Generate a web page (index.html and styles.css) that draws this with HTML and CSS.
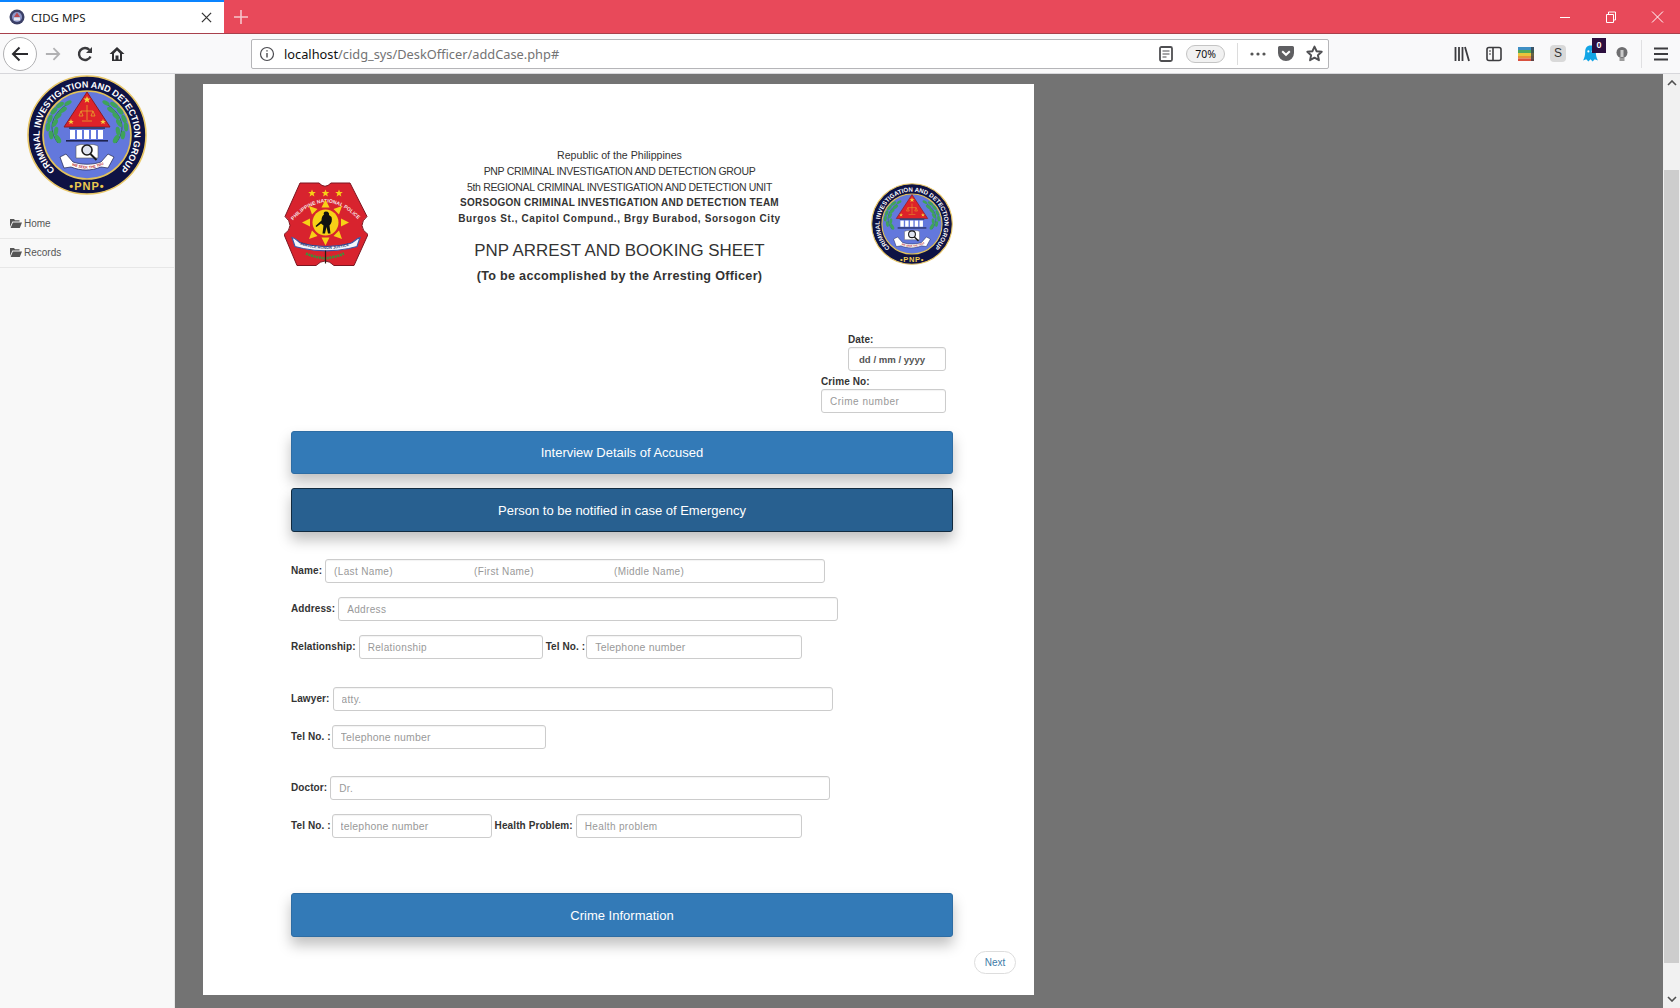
FILE: index.html
```html
<!DOCTYPE html>
<html lang="en">
<head>
  <meta charset="UTF-8">
  <title>CIDG MPS</title>
  <link rel="stylesheet" href="styles.css">
</head>
<body>

  <svg class="sprite" xmlns="http://www.w3.org/2000/svg">
    <symbol id="folder" viewBox="0 0 12 10">
      <path d="M0 9V1h4l1 1.2h4.500V3.600H2.400L0 9zM2.900 4.500H12L9.800 10H.6z" fill="#555"/>
    </symbol>
  </svg>

  <header class="tabbar">
    <div class="tab">
      <svg class="favicon" viewBox="0 0 16 16">
        <circle cx="8" cy="8" r="7.500" fill="#3a3f66"/>
        <circle cx="8" cy="8" r="5" fill="#8d97c9"/>
        <path d="M8 3.500L5 8h6z" fill="#b8474f"/>
        <rect x="5" y="8.500" width="6" height="3" fill="#e4e4ee"/>
      </svg>
      <span class="tab-title">CIDG MPS</span>
      <svg class="tab-close" viewBox="0 0 12 12"><path d="M1 1l10 10M11 1L1 11" stroke="#333" stroke-width="1.400"/></svg>
    </div>
    <svg class="new-tab" viewBox="0 0 14 14"><path d="M7 0v14M0 7h14" stroke="#f6c6cc" stroke-width="1.600"/></svg>
    <div class="win-controls">
      <svg viewBox="0 0 46 12"><path d="M18 6.500h10" stroke="#fff"/></svg>
      <svg viewBox="0 0 46 12"><path d="M18.500 3.500h7v8h-7zM20.500 3.500v-2.500h7v8h-2" fill="none" stroke="#fff"/></svg>
      <svg viewBox="0 0 46 12"><path d="M18 .5l11 11M29 .5l-11 11" stroke="#fff"/></svg>
    </div>
  </header>

  <nav class="toolbar">
    <span class="back-btn">
      <svg viewBox="0 0 18 16"><path d="M17 8H2M8.500 1.500L2 8l6.500 6.500" fill="none" stroke="#2a2a2e" stroke-width="2"/></svg>
    </span>
    <span class="tool"><svg viewBox="0 0 18 16"><path d="M1 8h15M9.500 1.500L16 8l-6.500 6.500" fill="none" stroke="#b1b1b3" stroke-width="2"/></svg></span>
    <span class="tool"><svg viewBox="0 0 16 16"><path d="M13.500 10.500A6 6 0 1 1 12.500 4" fill="none" stroke="#3a3a3d" stroke-width="2.400"/><path d="M15 1v6H9z" fill="#3a3a3d"/></svg></span>
    <span class="tool"><svg viewBox="0 0 16 16"><path d="M8 1L0.500 8H3v7h10V8h2.500zM5 13.500V7.500L8 4.600l3 2.900v6H9.500V9.500h-3v4z" fill="#2f2f32"/></svg></span>

    <div class="urlbar">
      <svg class="url-info" viewBox="0 0 16 16"><circle cx="8" cy="8" r="6.500" fill="none" stroke="#4a4a4f" stroke-width="1.200"/><path d="M8 7v4.500M8 4.200v1.400" stroke="#4a4a4f" stroke-width="1.400"/></svg>
      <span class="url-text"><b>localhost</b>/cidg_sys/DeskOfficer/addCase.php#</span>
      <svg class="url-reader" viewBox="0 0 14 16"><rect x="1" y="1" width="12" height="14" rx="1.500" fill="none" stroke="#4f4f52" stroke-width="1.800"/><path d="M3.500 5h7M3.500 8h7M3.500 11h4" stroke="#4f4f52" stroke-width="1.200"/></svg>
      <span class="url-zoom">70%</span>
      <span class="url-sep"></span>
      <svg class="url-dots" viewBox="0 0 16 4"><circle cx="2" cy="2" r="1.600" fill="#555"/><circle cx="8" cy="2" r="1.600" fill="#555"/><circle cx="14" cy="2" r="1.600" fill="#555"/></svg>
      <svg class="url-pocket" viewBox="0 0 16 15"><path d="M1.500 0h13A1.500 1.500 0 0 1 16 1.500V7A8 8 0 0 1 0 7V1.500A1.500 1.500 0 0 1 1.500 0z" fill="#5f5f62"/><path d="M4.200 5.200L8 8.800l3.800-3.600" fill="none" stroke="#fff" stroke-width="2"/></svg>
      <svg class="url-star" viewBox="0 0 16 16"><path d="M8 1.500l2 4.400 4.800.5-3.600 3.200 1 4.700L8 11.900l-4.200 2.400 1-4.700L1.200 6.400 6 5.900z" fill="none" stroke="#4f4f52" stroke-width="1.800" stroke-linejoin="round"/></svg>
    </div>

    <div class="tool-group">
      <span class="tool"><svg viewBox="0 0 16 16"><path d="M1.500 1v14M5 1v14M8.500 1v14M11 1l4 14" stroke="#3c3c3f" stroke-width="1.800" fill="none"/></svg></span>
      <span class="tool"><svg viewBox="0 0 16 16"><rect x="1" y="1.500" width="14" height="13" rx="2" fill="none" stroke="#3c3c3f" stroke-width="1.600"/><path d="M7 2v12" stroke="#3c3c3f" stroke-width="1.600"/><path d="M3 5h2M3 8h2" stroke="#3c3c3f"/></svg></span>
      <span class="tool"><svg viewBox="0 0 16 16"><rect y="1" width="16" height="3" fill="#3f8fc4"/><rect y="4" width="16" height="3" fill="#4fa85c"/><rect y="7" width="16" height="3" fill="#e9c53b"/><rect y="10" width="16" height="2.500" fill="#e8903a"/><rect y="12.500" width="16" height="2.500" fill="#d9513f"/><rect x="13" y="1" width="3" height="14" fill="#3a4048" opacity=".75"/></svg></span>
      <span class="tool"><span class="ext-s">S</span></span>
      <span class="tool ghost">
        <svg viewBox="0 0 16 16"><path d="M8 .5c3.500 0 5 2.500 5 6 0 3 .7 5.500 2 8l-3-1-2 2-2-2-2 2-2-2-3 1c1.300-2.500 2-5 2-8 0-3.500 1.500-6 5-6z" fill="#12a5e6"/><circle cx="6" cy="6" r="1" fill="#fff"/><circle cx="10" cy="6" r="1" fill="#fff"/></svg>
        <span class="ghost-badge">0</span>
      </span>
      <span class="tool"><svg viewBox="0 0 16 16"><circle cx="8" cy="6.500" r="5.500" fill="#6e6e70"/><rect x="6.500" y="4" width="3" height="7" fill="#c9c9c9"/><rect x="5.500" y="12" width="5" height="3" fill="#9a9a9a"/></svg></span>
    </div>
    <span class="tool-sep"></span>
    <span class="tool menu-btn"><svg viewBox="0 0 16 14"><path d="M1 1.500h14M1 7h14M1 12.500h14" stroke="#3c3c3f" stroke-width="2"/></svg></span>
  </nav>

  <div class="viewport">
    <aside class="sidebar">
      <svg class="side-logo" viewBox="0 0 120 120">
        <g id="cidgMark">
          <circle cx="60" cy="60" r="59" fill="#0e1244" stroke="#e9c766" stroke-width="1.600"/>
          <circle cx="60" cy="60" r="44" fill="#6378dc" stroke="#e2c25a" stroke-width="1.600"/>
          <path id="cidgRing" d="M28 95A47.400 47.400 0 1 1 92 95" fill="none"/>
          <text font-family="Liberation Sans, sans-serif" font-weight="700" font-size="9" fill="#fff" textLength="226">
            <textPath href="#cidgRing">CRIMINAL INVESTIGATION AND DETECTION GROUP</textPath>
          </text>
          <text x="60" y="115" text-anchor="middle" font-family="Liberation Sans, sans-serif" font-weight="700" font-size="11" letter-spacing="1" fill="#ecc94f">•PNP•</text>
          <!-- laurel -->
          <g id="cidgLeaves" fill="#3ea35a">
            <path d="M31 68C20 54 24 38 44 27" fill="none" stroke="#1f6e35" stroke-width=".8"/>
            <ellipse cx="31" cy="64" rx="2.400" ry="4.600" transform="rotate(-30 31 64)"/>
            <ellipse cx="24" cy="60" rx="2.200" ry="4.400" transform="rotate(-10 24 60)"/>
            <ellipse cx="29" cy="56" rx="2.200" ry="4.400" transform="rotate(10 29 56)"/>
            <ellipse cx="21" cy="52" rx="2.200" ry="4.400" transform="rotate(5 21 52)"/>
            <ellipse cx="28" cy="48" rx="2.200" ry="4.400" transform="rotate(30 28 48)"/>
            <ellipse cx="23" cy="44" rx="2.200" ry="4.400" transform="rotate(20 23 44)"/>
            <ellipse cx="31" cy="41" rx="2.200" ry="4.400" transform="rotate(45 31 41)"/>
            <ellipse cx="27" cy="36" rx="2.200" ry="4.400" transform="rotate(40 27 36)"/>
            <ellipse cx="36" cy="35" rx="2.200" ry="4.400" transform="rotate(55 36 35)"/>
            <ellipse cx="33" cy="30" rx="2.200" ry="4.400" transform="rotate(55 33 30)"/>
            <ellipse cx="41" cy="28" rx="2" ry="4" transform="rotate(60 41 28)"/>
          </g>
          <use href="#cidgLeaves" transform="matrix(-1 0 0 1 120 0)"/>
          <!-- temple -->
          <path d="M60 17L37 52H83Z" fill="#de2229" stroke="#8c1a24" stroke-width="1"/>
          <path d="M60 21l1 2.600h2.600l-2.100 1.600.8 2.600-2.300-1.600-2.300 1.600.8-2.600-2.100-1.600h2.600zM44 44l.8 2h2l-1.600 1.200.6 2-1.800-1.200-1.800 1.200.6-2-1.600-1.200h2zM76 44l.8 2h2l-1.600 1.200.6 2-1.800-1.200-1.800 1.200.6-2-1.600-1.200h2z" fill="#f4d03f"/>
          <path d="M60 30v15M54 36h12M54 36l-2 5h4zM66 36l-2 5h4zM55 46h10" fill="none" stroke="#e7a52c" stroke-width=".8"/>
          <rect x="42" y="52" width="36" height="2" fill="#3a3f70"/>
          <g fill="#fff">
            <rect x="43" y="55" width="5" height="9"/><rect x="50" y="55" width="5" height="9"/>
            <rect x="57" y="55" width="5" height="9"/><rect x="64" y="55" width="5" height="9"/>
            <rect x="71" y="55" width="5" height="9"/>
          </g>
          <rect x="39" y="65" width="42" height="1.600" fill="#1e2350"/>
          <!-- book and lens -->
          <path d="M49 71c4-2 8-2 11 0 3-2 7-2 11 0v12H49z" fill="#fff" stroke="#555" stroke-width=".6"/>
          <circle cx="60" cy="75" r="5" fill="#dfe4f0" stroke="#1b1b1b" stroke-width="1.600"/>
          <path d="M63.500 79l6 6" stroke="#1b1b1b" stroke-width="2"/>
          <!-- banner -->
          <path d="M33 82l6-3 7 8c9 3 19 3 28 0l7-8 6 3-6 11-7-1c-10 4-20 4-30 0l-7 1z" fill="#fff" stroke="#1e2350" stroke-width=".7"/>
          <path id="cidgMotto" d="M42 89C54 95 66 95 78 89" fill="none"/>
          <text font-family="Liberation Sans, sans-serif" font-weight="700" font-size="3.600" fill="#b3202a">
            <textPath href="#cidgMotto" startOffset="3">WE SEEK THE TRUTH</textPath>
          </text>
        </g>
      </svg>
      <ul class="side-menu">
        <li><svg class="folder"><use href="#folder"/></svg>Home</li>
        <li><svg class="folder"><use href="#folder"/></svg>Records</li>
      </ul>
    </aside>

    <main class="content">
      <div class="paper">
        <div class="sheet-head">
          <svg class="logo-pnp" viewBox="0 0 84 84">
            <path d="M16 .5H35Q41 7 47 .5H66L83 34Q78 38 78 43T84 52L70 83H50Q41 74 32 83H13L0 52Q6 48 6 43T1 34Z" fill="#d8232e" stroke="#7d1520" stroke-width="1"/>
            <path id="pnpArc" d="M9 38Q41.500 2 75 38" fill="none"/>
            <text font-family="Liberation Sans, sans-serif" font-weight="700" font-size="5" fill="#f6e6e6" textLength="76">
              <textPath href="#pnpArc">PHILIPPINE NATIONAL POLICE</textPath>
            </text>
            <path d="M28 7l1 2.600h2.800l-2.200 1.700.8 2.700-2.400-1.600-2.400 1.600.8-2.700-2.200-1.700H27zM41.500 7l1 2.600h2.800l-2.200 1.700.8 2.700-2.400-1.600-2.400 1.600.8-2.700-2.200-1.700h2.800zM55 7l1 2.600h2.800l-2.200 1.700.8 2.700-2.400-1.600-2.400 1.600.8-2.700-2.200-1.700H54z" fill="#f7d117"/>
            <g fill="#f7d117">
              <path d="M41.500 17l4 8h-8zM41.500 63l4-8h-8zM18 40l8-4v8zM65 40l-8-4v8z"/>
              <path d="M25 23.500l8.500 3-5.500 5.500zM58 23.500l-8.500 3 5.500 5.500zM25 56.500l8.500-3-5.500-5.500zM58 56.500l-8.500-3 5.500-5.500z"/>
              <circle cx="41.500" cy="40" r="13"/>
            </g>
            <path d="M42 29c2.500 0 3.500 2 3 3.500l2.500 2c1 3 0 6.500-2 8.500l1 8h-2.500l-1.500-6.500-1.500 6.500h-2.500l1-8-2.500-2-4.500 3.500-1-1 6-5.500c0-3 1-5 2.500-6-.8-1.500 0-3 2-3z" fill="#111"/>
            <path d="M8 55c5 1 6 5 10 6 16 4 32 4 48 0 4-1 6-5 10-6l-3 9-8 2c-15 3-31 3-46 0l-8-2z" fill="#f4f6fb" stroke="#3d56a6" stroke-width="1.200"/>
            <path id="pnpBan" d="M16 62C32 68 52 68 68 62" fill="none"/>
            <text font-family="Liberation Sans, sans-serif" font-weight="700" font-size="3.800" fill="#27346f" textLength="50">
              <textPath href="#pnpBan">SERVICE HONOR JUSTICE</textPath>
            </text>
            <path d="M22 71c6 3 13 4 19 5 6-1 13-2 19-5" fill="none" stroke="#3f8f3a" stroke-width="2.600" stroke-dasharray="2 .7"/>
            <path d="M41.500 68v13" stroke="#2a1a10" stroke-width="1.200"/>
          </svg>
          <div class="head-text">
            <p class="republic">Republic of the Philippines</p>
            <p>PNP CRIMINAL INVESTIGATION AND DETECTION GROUP</p>
            <p>5th REGIONAL CRIMINAL INVESTIGATION AND DETECTION UNIT</p>
            <p class="strong">SORSOGON CRIMINAL INVESTIGATION AND DETECTION TEAM</p>
            <p class="strong addr">Burgos St., Capitol Compund., Brgy Burabod, Sorsogon City</p>
            <h1>PNP ARREST AND BOOKING SHEET</h1>
            <h2>(To be accomplished by the Arresting Officer)</h2>
          </div>
          <svg class="logo-cidg" viewBox="0 0 120 120"><use href="#cidgMark"/></svg>
        </div>

        <div class="date-block">
          <div class="date-field">
            <label for="caseDate">Date:</label>
            <input class="field date-input" id="caseDate" type="text" value="dd / mm / yyyy">
          </div>
          <div class="crime-field">
            <label for="crimeNo">Crime No:</label>
            <input class="field" id="crimeNo" type="text" placeholder="Crime number">
          </div>
        </div>

        <button class="panel-btn">Interview Details of Accused</button>
        <button class="panel-btn active">Person to be notified in case of Emergency</button>

        <form class="person-form">
          <div class="row">
            <label>Name:</label>
            <div class="name-box">
              <input type="text" placeholder="(Last Name)">
              <input type="text" placeholder="(First Name)">
              <input type="text" placeholder="(Middle Name)">
            </div>
          </div>
          <div class="row">
            <label>Address:</label>
            <input class="field w-500" type="text" placeholder="Address">
          </div>
          <div class="row">
            <label>Relationship:</label>
            <input class="field w-184" type="text" placeholder="Relationship">
            <label class="next-label tel">Tel No. :</label>
            <input class="field tel-field w-216" type="text" placeholder="Telephone number">
          </div>

          <div class="row group">
            <label>Lawyer:</label>
            <input class="field w-500" type="text" placeholder="atty.">
          </div>
          <div class="row">
            <label class="tel">Tel No. :</label>
            <input class="field tel-field w-214" type="text" placeholder="Telephone number">
          </div>

          <div class="row group doctor">
            <label>Doctor:</label>
            <input class="field w-500" type="text" placeholder="Dr.">
          </div>
          <div class="row">
            <label class="tel">Tel No. :</label>
            <input class="field tel-field w-160" type="text" placeholder="telephone number">
            <label class="next-label">Health Problem:</label>
            <input class="field w-226" type="text" placeholder="Health problem">
          </div>
        </form>

        <button class="panel-btn crime-btn">Crime Information</button>
        <a class="next-btn" href="#">Next</a>
      </div>
    </main>

    <div class="scrollbar">
      <svg class="arrow" viewBox="0 0 10 6"><path d="M1 5l4-4 4 4" fill="none" stroke="#505050" stroke-width="1.600"/></svg>
      <span class="thumb"></span>
      <svg class="arrow" viewBox="0 0 10 6"><path d="M1 1l4 4 4-4" fill="none" stroke="#505050" stroke-width="1.600"/></svg>
    </div>
  </div>

</body>
</html>
```

FILE: styles.css
```css
* {
  box-sizing: border-box;
}
html, body {
  margin: 0;
  height: 100%;
}
body {
  display: flex;
  flex-direction: column;
  height: 1008px;
  overflow: hidden;
  font-family: "Liberation Sans", Arial, sans-serif;
  color: #333;
}
.sprite {
  position: absolute;
  width: 0;
  height: 0;
}

/* browser chrome */
.tabbar {
  display: flex;
  align-items: center;
  height: 34px;
  background: #e8495a;
  border-bottom: 1px solid #a8404c;
}
.tab {
  display: flex;
  align-items: center;
  width: 224px;
  height: 33px;
  padding: 0 10px 1px 9px;
  background: #fff;
  border-top: 2px solid #0a84ff;
}
.favicon {
  width: 16px;
  height: 16px;
  margin-right: 6px;
}
.tab-title {
  flex: 1;
  font-family: "Noto Sans", sans-serif;
  font-size: 11.5px;
  color: #222;
}
.tab-close {
  width: 11px;
  height: 11px;
  margin-right: 2px;
}
.new-tab {
  width: 14px;
  height: 14px;
  margin-left: 10px;
}
.win-controls {
  display: flex;
  margin-left: auto;
}
.win-controls svg {
  width: 46px;
  height: 12px;
}

.toolbar {
  display: flex;
  align-items: center;
  height: 40px;
  padding-left: 3px;
  background: #f9f9fa;
  border-bottom: 1px solid #d7d7db;
}
.back-btn {
  display: flex;
  align-items: center;
  justify-content: center;
  width: 34px;
  height: 34px;
  background: #fff;
  border: 1px solid #b1b1b3;
  border-radius: 50%;
}
.back-btn svg {
  width: 18px;
  height: 16px;
}
.tool {
  display: flex;
  align-items: center;
  justify-content: center;
  width: 32px;
  height: 32px;
}
.tool svg {
  width: 16px;
  height: 16px;
}
.urlbar {
  display: flex;
  align-items: center;
  width: 1078px;
  height: 30px;
  margin-left: 118px;
  background: #fff;
  border: 1px solid #b5b5b8;
  border-radius: 2px;
}
.url-info {
  width: 16px;
  height: 16px;
  margin-left: 7px;
}
.url-text {
  flex: 1;
  margin-left: 9px;
  font-family: "Noto Sans", sans-serif;
  font-size: 12.8px;
  color: #737373;
}
.url-text b {
  font-weight: 400;
  color: #111;
}
.url-reader {
  width: 14px;
  height: 16px;
  margin-right: 13px;
}
.url-zoom {
  width: 39px;
  height: 18px;
  border: 1px solid #c4c4c4;
  border-radius: 9px;
  background: #f1f1f1;
  font-family: "Noto Sans", sans-serif;
  font-size: 10.5px;
  line-height: 16px;
  text-align: center;
  color: #111;
}
.url-sep {
  width: 1px;
  height: 22px;
  margin: 0 12px;
  background: #dcdcdc;
}
.url-dots {
  width: 16px;
  height: 4px;
  margin-right: 12px;
}
.url-pocket {
  width: 16px;
  height: 15px;
  margin-right: 12px;
}
.url-star {
  width: 17px;
  height: 17px;
  margin-right: 5px;
}
.tool-group {
  display: flex;
  margin-left: 117px;
}
.ext-s {
  display: block;
  width: 16px;
  height: 17px;
  border-radius: 4px;
  background: #d9d9d9;
  font-size: 12px;
  line-height: 17px;
  text-align: center;
  color: #333;
}
.ghost {
  position: relative;
}
.ghost svg {
  width: 17px;
  height: 17px;
}
.ghost-badge {
  position: absolute;
  top: 0;
  left: 18px;
  width: 14px;
  height: 15px;
  background: #2c0f3f;
  color: #fff;
  font-size: 9px;
  font-weight: 700;
  line-height: 14px;
  text-align: center;
}
.tool-sep {
  width: 1px;
  height: 28px;
  margin-left: 3px;
  background: #e0e0e2;
}
.menu-btn {
  margin-left: 3px;
}

/* page area */
.viewport {
  display: flex;
  flex: 1;
  min-height: 0;
}
.sidebar {
  width: 175px;
  background: #f8f8f8;
  border-right: 1px solid #e7e7e7;
}
.side-logo {
  display: block;
  width: 120px;
  height: 120px;
  margin: 1px auto 15px;
}
.side-menu {
  margin: 0;
  padding: 0;
  list-style: none;
}
.side-menu li {
  display: flex;
  align-items: center;
  height: 29px;
  padding: 0 0 2px 10px;
  border-bottom: 1px solid #e7e7e7;
  font-size: 10px;
  color: #555;
}
.folder {
  width: 12px;
  height: 10px;
  margin-right: 2px;
}

.content {
  flex: 1;
  background: #737373;
}
.paper {
  display: flex;
  flex-direction: column;
  width: 831px;
  height: 911px;
  margin: 10px 0 0 28px;
  padding: 63px 81px 0 88px;
  background: #fff;
}
.sheet-head {
  display: flex;
  justify-content: space-between;
  margin-left: -7px;
}
.logo-pnp {
  width: 84px;
  height: 85px;
  margin-top: 35px;
}
.logo-cidg {
  width: 82px;
  height: 82px;
  margin-top: 36px;
}
.head-text {
  text-align: center;
}
.head-text p {
  margin: 0;
  font-size: 10.5px;
  line-height: 16px;
  letter-spacing: -.33px;
  color: #333;
}
.head-text .republic {
  font-size: 10.6px;
  letter-spacing: 0;
}
.head-text .strong {
  font-size: 10px;
  font-weight: 700;
  letter-spacing: .26px;
}
.head-text .addr {
  letter-spacing: .6px;
}
.head-text h1 {
  margin: 13px 0 0;
  font-size: 16.9px;
  font-weight: 400;
  line-height: 22px;
}
.head-text h2 {
  margin: 5px 0 0;
  font-size: 12.6px;
  font-weight: 700;
  line-height: 18px;
  letter-spacing: .3px;
}

.date-block {
  display: flex;
  flex-direction: column;
  align-items: flex-end;
  margin-top: 48px;
  padding-right: 7px;
}
label {
  display: block;
  font-size: 10px;
  font-weight: 700;
  letter-spacing: .1px;
  color: #333;
  white-space: nowrap;
}
.date-block label {
  line-height: 14px;
}
.date-field {
  width: 98px;
}
.crime-field {
  width: 125px;
  margin-top: 4px;
}
.field {
  display: block;
  width: 100%;
  height: 24px;
  padding: 0 8px;
  border: 1px solid #ccc;
  border-radius: 3px;
  background: #fff;
  font-family: "Liberation Sans", Arial, sans-serif;
  font-size: 10px;
  letter-spacing: .35px;
  color: #555;
  box-shadow: inset 0 1px 1px rgba(0,0,0,.05);
}
#crimeNo {
  letter-spacing: .5px;
}
.tel-field {
  font-size: 10.5px;
  letter-spacing: .2px;
}
.date-input {
  padding-left: 10px;
  letter-spacing: 0;
  font-weight: 700;
  font-size: 9.6px;
}
input::placeholder {
  color: #999;
  opacity: 1;
}

.panel-btn {
  display: block;
  width: 662px;
  height: 43px;
  margin-top: 18px;
  border: 1px solid #2e6da4;
  border-radius: 3px;
  background: #337ab7;
  font-family: "Liberation Sans", Arial, sans-serif;
  font-size: 13px;
  color: #fff;
  box-shadow: 0 8px 14px rgba(0,0,0,.25);
}
.panel-btn.active {
  height: 44px;
  margin-top: 14px;
  border-color: #122b40;
  background: #286090;
}
.crime-btn {
  height: 44px;
  margin-top: 55px;
}

.person-form {
  margin-top: 27px;
}
.row {
  display: flex;
  align-items: center;
  margin-top: 14px;
}
.row:first-child {
  margin-top: 0;
}
.row.group {
  margin-top: 28px;
}
.row.doctor {
  margin-top: 27px;
}
.row label {
  margin-right: 3px;
  padding-bottom: 1px;
}
.row label.tel {
  margin-right: 1px;
}
.row .next-label {
  margin-left: 3px;
}
.name-box {
  display: flex;
  width: 500px;
  height: 24px;
  padding-left: 8px;
  border: 1px solid #ccc;
  border-radius: 3px;
  box-shadow: inset 0 1px 1px rgba(0,0,0,.05);
}
.name-box input {
  width: 140px;
  padding: 0;
  border: 0;
  outline: 0;
  background: none;
  font-family: "Liberation Sans", Arial, sans-serif;
  font-size: 10px;
  letter-spacing: .35px;
}
.w-500 { width: 500px; }
.w-184 { width: 184px; }
.w-216 { width: 216px; }
.w-214 { width: 214px; }
.w-160 { width: 160px; }
.w-226 { width: 226px; }

.next-btn {
  align-self: flex-end;
  width: 42px;
  height: 23px;
  margin: 14px -63px 0 0;
  border: 1px solid #ddd;
  border-radius: 12px;
  font-size: 10px;
  line-height: 21px;
  text-align: center;
  text-decoration: none;
  color: #3d7ba8;
}

.scrollbar {
  display: flex;
  flex-direction: column;
  align-items: center;
  width: 17px;
  background: #f1f1f1;
}
.arrow {
  width: 10px;
  height: 6px;
  margin: 6px 0;
}
.thumb {
  width: 15px;
  height: 793px;
  margin: 78px 0 auto;
  background: #cdcdcd;
}
```
